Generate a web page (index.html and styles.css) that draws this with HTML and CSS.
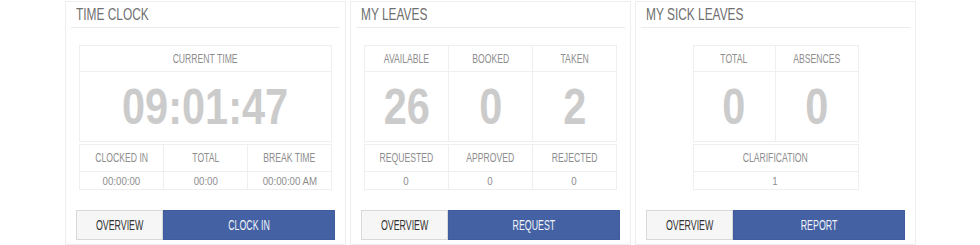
FILE: index.html
```html
<!DOCTYPE html>
<html>
<head>
<meta charset="utf-8">
<link rel="stylesheet" href="styles.css">
</head>
<body>
<div class="panels">
  <section class="panel">
    <h2 class="panel-title"><span class="sx">TIME CLOCK</span></h2>
    <table class="stat main wide">
      <tr><td class="label"><span class="sx">CURRENT TIME</span></td></tr>
      <tr><td class="big"><span class="sx">09:01:47</span></td></tr>
    </table>
    <table class="stat sub wide">
      <tr><td class="label"><span class="sx">CLOCKED IN</span></td><td class="label"><span class="sx">TOTAL</span></td><td class="label"><span class="sx">BREAK TIME</span></td></tr>
      <tr><td class="val"><span class="sx">00:00:00</span></td><td class="val"><span class="sx">00:00</span></td><td class="val"><span class="sx">00:00:00 AM</span></td></tr>
    </table>
    <div class="actions">
      <button class="btn btn-light"><span class="sx">OVERVIEW</span></button>
      <button class="btn btn-blue"><span class="sx">CLOCK IN</span></button>
    </div>
  </section>
  <section class="panel">
    <h2 class="panel-title"><span class="sx">MY LEAVES</span></h2>
    <table class="stat main wide">
      <tr><td class="label"><span class="sx">AVAILABLE</span></td><td class="label"><span class="sx">BOOKED</span></td><td class="label"><span class="sx">TAKEN</span></td></tr>
      <tr><td class="big"><span class="sx">26</span></td><td class="big"><span class="sx">0</span></td><td class="big"><span class="sx">2</span></td></tr>
    </table>
    <table class="stat sub wide">
      <tr><td class="label"><span class="sx">REQUESTED</span></td><td class="label"><span class="sx">APPROVED</span></td><td class="label"><span class="sx">REJECTED</span></td></tr>
      <tr><td class="val"><span class="sx">0</span></td><td class="val"><span class="sx">0</span></td><td class="val"><span class="sx">0</span></td></tr>
    </table>
    <div class="actions">
      <button class="btn btn-light"><span class="sx">OVERVIEW</span></button>
      <button class="btn btn-blue"><span class="sx">REQUEST</span></button>
    </div>
  </section>
  <section class="panel">
    <h2 class="panel-title"><span class="sx">MY SICK LEAVES</span></h2>
    <table class="stat main narrow">
      <tr><td class="label"><span class="sx">TOTAL</span></td><td class="label"><span class="sx">ABSENCES</span></td></tr>
      <tr><td class="big"><span class="sx">0</span></td><td class="big"><span class="sx">0</span></td></tr>
    </table>
    <table class="stat sub narrow">
      <tr><td class="label"><span class="sx">CLARIFICATION</span></td></tr>
      <tr><td class="val"><span class="sx">1</span></td></tr>
    </table>
    <div class="actions">
      <button class="btn btn-light"><span class="sx">OVERVIEW</span></button>
      <button class="btn btn-blue"><span class="sx">REPORT</span></button>
    </div>
  </section>
</div>
</body>
</html>
```
FILE: styles.css
```css
html, body {
  margin: 0;
  padding: 0;
  background: #ffffff;
}
body {
  font-family: "Liberation Sans", Arial, sans-serif;
  color: #999;
}
.sx {
  display: inline-block;
  white-space: nowrap;
  transform-origin: center;
}
.panels {
  display: flex;
  gap: 4px;
  padding: 1px 0 0 65px;
}
.panel {
  box-sizing: border-box;
  width: 281px;
  height: 244px;
  border: 1px solid #eeeeee;
  display: flex;
  flex-direction: column;
}
.panel-title {
  margin: 0 5px;
  height: 25px;
  box-sizing: content-box;
  padding-left: 5px;
  border-bottom: 1px solid #ebebeb;
  font-size: 17px;
  font-weight: normal;
  color: #707070;
  line-height: 26px;
}
.panel-title .sx {
  transform: scaleX(0.7);
  transform-origin: left center;
}
.stat {
  border-collapse: collapse;
  margin: 0 auto;
  table-layout: fixed;
}
.stat.wide { width: 253px; }
.stat.narrow { width: 166px; }
.stat td {
  border: 1px solid #efefef;
  text-align: center;
  padding: 0;
}
.main { margin-top: 17px; }
.sub { margin-top: 2px; }
.main .label { height: 25px; }
.sub .label { height: 26px; }
.label {
  font-size: 12px;
  color: #8e8e8e;
}
.label .sx { transform: scaleX(0.72); }
.big {
  height: 69px;
  font-size: 50px;
  font-weight: bold;
  color: #cbcbcb;
}
.big .sx { transform: scaleX(0.83); }
.val {
  height: 17px;
  font-size: 11px;
  color: #8e8e8e;
}
.val .sx { transform: scaleX(0.88); }
.actions {
  display: flex;
  margin: 20px 10px 0;
  height: 30px;
}
.btn {
  font-family: inherit;
  font-size: 14px;
  height: 30px;
  margin: 0;
  padding: 0;
  cursor: pointer;
}
.btn .sx { transform: scaleX(0.63); }
.btn-light {
  flex: 1;
  background: #f6f6f6;
  border: 1px solid #d9d9d9;
  color: #333;
}
.btn-blue {
  flex: 2;
  background: #4462a3;
  border: 1px solid #3f5d9e;
  color: #f2f4fa;
}
```
